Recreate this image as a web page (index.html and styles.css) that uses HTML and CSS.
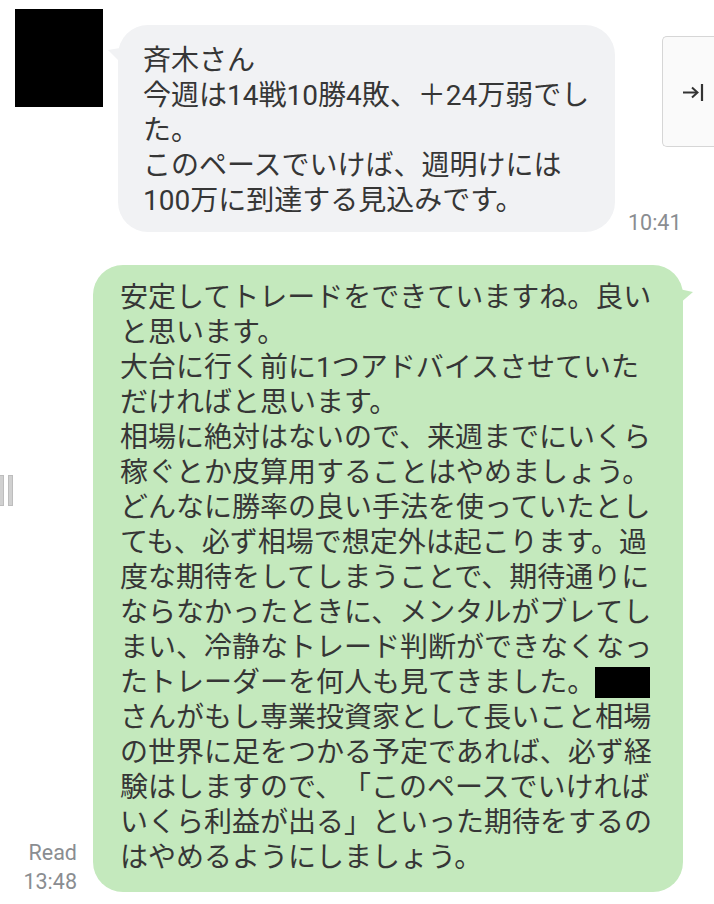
FILE: index.html
```html
<!DOCTYPE html>
<html lang="ja">
<head>
<meta charset="utf-8">
<title>Chat</title>
<link rel="stylesheet" href="styles.css">
</head>
<body>
<div class="chat">
  <div class="row-in">
    <div class="avatar"></div>
    <div class="in-wrap">
      <div class="bubble bubble-in">
        <svg class="tail tail-in" width="12" height="16" viewBox="0 0 12 16"><polygon points="0,3 12,1 12,15" /></svg>
        斉木さん<br>
        今週は14戦10勝4敗、＋24万弱でした。<br>
        このペースでいけば、週明けには100万に到達する見込みです。
      </div>
      <div class="time time-in">10:41</div>
    </div>
  </div>

  <div class="row-out">
    <div class="meta-out">
      <div>Read</div>
      <div>13:48</div>
    </div>
    <div class="bubble bubble-out">
      <svg class="tail tail-out" width="14" height="16" viewBox="0 0 14 16"><polygon points="0,0 14,3 0,15" /></svg>
      安定してトレードをできていますね。良いと思います。<br>
      大台に行く前に1つアドバイスさせていただければと思います。<br>
      相場に絶対はないので、来週までにいくら稼ぐとか皮算用することはやめましょう。どんなに勝率の良い手法を使っていたとしても、必ず相場で想定外は起こります。過度な期待をしてしまうことで、期待通りにならなかったときに、メンタルがブレてしまい、冷静なトレード判断ができなくなったトレーダーを何人も見てきました。<span class="redact"></span>さんがもし専業投資家として長いこと相場の世界に足をつかる予定であれば、必ず経験はしますので、「このペースでいければいくら利益が出る」といった期待をするのはやめるようにしましょう。
    </div>
  </div>
</div>

<div class="side-toggle">
  <svg width="24" height="20" viewBox="0 0 24 20">
    <path d="M1 9.5 H15" stroke="#333" stroke-width="2" fill="none"/>
    <path d="M10 4.5 L15.5 9.5 L10 14.5" stroke="#333" stroke-width="2" fill="none"/>
    <path d="M20 1 V18" stroke="#333" stroke-width="2.2" fill="none"/>
  </svg>
</div>

<div class="handle">
  <span class="bar"></span>
  <span class="bar"></span>
</div>
</body>
</html>
```

FILE: styles.css
```css
html, body {
  margin: 0;
  padding: 0;
  background: #ffffff;
  overflow: hidden;
}

body {
  font-family: Roboto, "Noto Sans CJK JP", sans-serif;
  color: #363636;
  width: 714px;
  height: 904px;
  position: relative;
}

.chat {
  padding: 9px 0 0 15px;
}

.row-in {
  display: flex;
  align-items: flex-start;
}

.avatar {
  width: 88px;
  height: 98px;
  background: #000000;
  flex: none;
}

.in-wrap {
  display: flex;
  align-items: flex-end;
  margin-left: 15px;
  margin-top: 16px;
}

.bubble {
  position: relative;
  box-sizing: border-box;
  font-size: 28px;
  line-height: 35px;
  text-spacing-trim: space-all;
  line-break: normal;
  word-break: normal;
}

.bubble-in {
  width: 497px;
  padding: 18px 20px 14px 25px;
  background: #f1f2f4;
  border-radius: 30px;
}

.tail {
  position: absolute;
}

.tail-in {
  left: -10px;
  top: 22px;
  fill: #f1f2f4;
}

.time {
  color: #8a8d91;
  font-size: 21.5px;
  line-height: 24px;
}

.time-in {
  margin-left: 13px;
  margin-bottom: -3px;
}

.row-out {
  display: flex;
  justify-content: flex-end;
  align-items: flex-end;
  margin-top: 33px;
  padding-right: 31px;
}

.meta-out {
  color: #8a8d91;
  font-size: 21.5px;
  line-height: 29px;
  text-align: right;
  margin-right: 16px;
  margin-bottom: -4px;
}

.bubble-out {
  width: 590px;
  padding: 15px 22px 17px 27px;
  background: #c4e9bd;
  border-radius: 30px;
}

.tail-out {
  left: 586px;
  top: 24px;
  fill: #c4e9bd;
}

.redact {
  display: inline-block;
  width: 55px;
  height: 31px;
  background: #000000;
  vertical-align: -6px;
}

.side-toggle {
  position: absolute;
  top: 36px;
  right: 0;
  width: 32px;
  height: 109px;
  background: #fafafa;
  border: 1px solid #d6d6d6;
  border-right: none;
  border-radius: 5px 0 0 5px;
  display: flex;
  align-items: center;
  padding-left: 19px;
  box-sizing: content-box;
}

.side-toggle svg {
  display: block;
  margin-top: 3px;
}

.handle {
  position: absolute;
  left: -1px;
  top: 475px;
  display: flex;
  gap: 4px;
}

.bar {
  display: block;
  width: 3px;
  height: 29px;
  background: #d0d0d0;
  border: 1px solid #bdbdbd;
}
```
